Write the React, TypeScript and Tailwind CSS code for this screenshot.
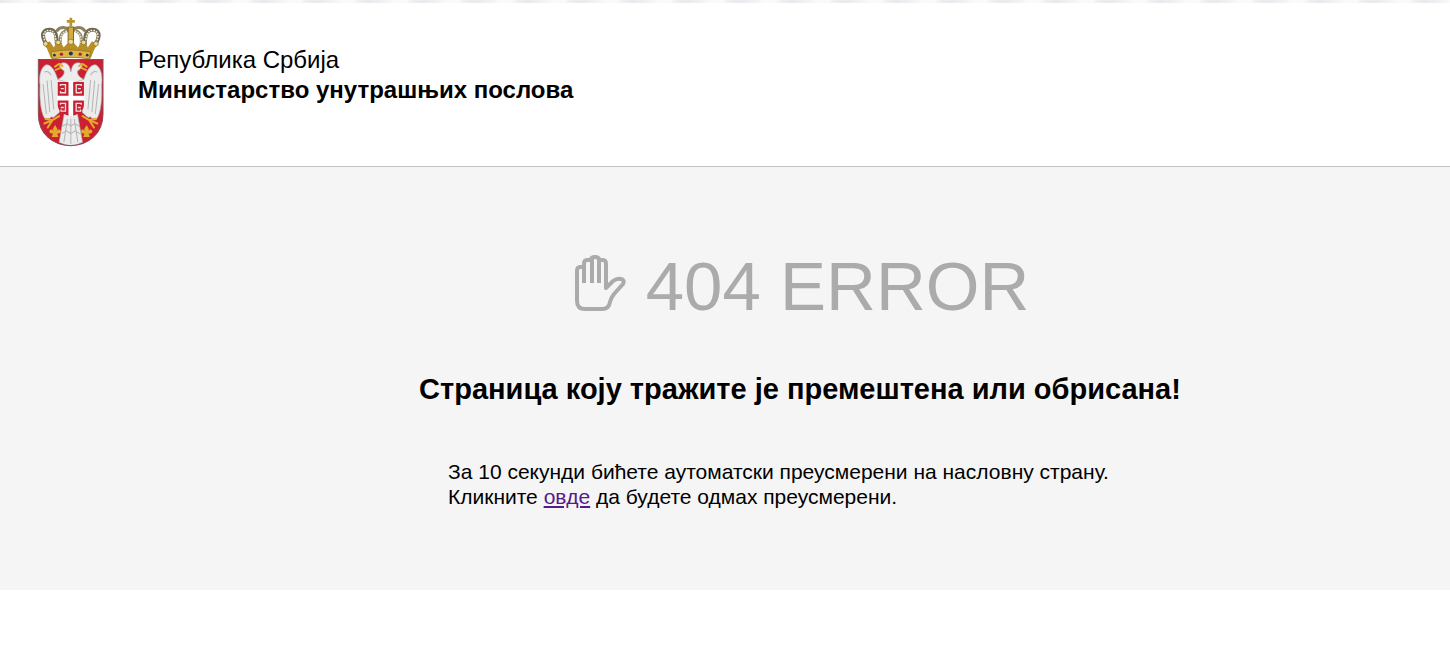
import { useId } from "react";

function Emblem() {
  const clip = useId();
  return (
    <svg viewBox="0 0 200 388" className="h-[130px] w-[67px] shrink-0" role="img" aria-label="Грб Републике Србије">
      <defs>
        <clipPath id={clip}>
          <path d="M4 127H197V290C197 350 150 384 100 384C50 384 4 350 4 290Z" />
        </clipPath>
      </defs>
      {/* crown */}
      <path d="M97 2h8v7h8v8h-8v11h-8v-11h-8V9h8Z" fill="#b8942f" />
      <g fill="none" strokeLinecap="round">
        <path d="M42 98C10 66 12 38 36 38C60 38 58 60 60 90M160 98C192 66 190 38 166 38C142 38 144 60 142 90" stroke="#6f6850" strokeWidth="12" />
        <path d="M60 40C70 28 88 30 96 38M142 40C132 28 114 30 106 38M72 90C66 62 70 44 90 40M130 90C136 62 132 44 112 40" stroke="#8b815c" strokeWidth="9" />
        <path d="M40 94C12 66 16 40 36 40C54 40 56 60 58 84M162 94C190 66 186 40 166 40C148 40 146 60 144 84M72 84C68 60 72 46 90 42M130 84C134 60 130 46 112 42" stroke="#ece7d3" strokeWidth="5" strokeDasharray="1 7" />
      </g>
      <path d="M93 30H109V90H93Z" fill="#d3ac3c" stroke="#7d6326" strokeWidth="3" />
      <path d="M24 80L38 72L50 90L64 70L80 90L101 68L122 90L138 70L152 90L164 72L178 80L160 124Q101 114 42 124Z" fill="#b98f25" />
      <path d="M42 104Q101 93 160 104L156 125Q101 116 46 125Z" fill="#dcb545" stroke="#8c6b1f" strokeWidth="2" />
      <g fill="#eed98e" stroke="#80632c" strokeWidth="2">
        <circle cx="26" cy="80" r="7" />
        <circle cx="63" cy="76" r="7" />
        <circle cx="101" cy="74" r="8" />
        <circle cx="139" cy="76" r="7" />
        <circle cx="176" cy="80" r="7" />
      </g>
      <circle cx="101" cy="109" r="6" fill="#1f335f" />
      <circle cx="73" cy="111" r="5" fill="#b62130" />
      <circle cx="129" cy="111" r="5" fill="#b62130" />
      <circle cx="52" cy="114" r="4" fill="#1f335f" />
      <circle cx="150" cy="114" r="4" fill="#1f335f" />
      {/* shield */}
      <g clipPath={`url(#${clip})`}>
        <path d="M0 120H200V390H0Z" fill="#cb2031" />
        <g fill="#edeced" stroke="#aaa" strokeWidth="2">
          <path d="M62 186C52 154 38 138 24 144C8 156 6 182 9 204C7 250 12 296 28 308C32 298 38 308 42 298C52 304 56 292 66 286L92 186Z" />
          <path d="M140 186C150 154 164 138 178 144C194 156 196 182 193 204C195 250 190 296 174 308C170 298 164 308 160 298C150 304 146 292 136 286L110 186Z" />
          <path d="M101 200L62 186C76 180 84 170 80 160C72 156 66 150 68 142C76 132 94 136 98 152L101 164L104 152C108 136 126 132 134 142C136 150 130 156 122 160C118 170 126 180 140 186Z" />
          <path d="M82 284H120L136 374Q101 394 66 374Z" />
        </g>
        <g fill="none" stroke="#b4b4b4" strokeWidth="3">
          <path d="M18 200L28 290M30 190L38 284M42 188L50 276M22 164Q34 158 42 174M184 200L174 290M172 190L164 284M160 188L152 276M180 164Q168 158 160 174" />
          <path d="M91 304L80 374M101 304V380M111 304L122 374M76 326L90 318L101 326L112 318L126 326M74 348L88 340L101 348L114 340L128 348" />
        </g>
        <path d="M62 194H140V262Q140 288 101 296Q62 288 62 262Z" fill="#c71f30" />
        <path d="M94 190H108V235H142V249H108V296H94V249H60V235H94Z" fill="#fff" />
        <g fill="none" stroke="#f3dfe1" strokeWidth="4">
          <path d="M70 206V202H85V226H70V221M80 214H71M132 206V202H117V226H132V221M122 214H131M70 262V258H85V281H72V276M80 270H71M132 262V258H117V281H130V276M122 270H131" />
        </g>
        <g fill="none" stroke="#e5ac2b" strokeWidth="6" strokeLinecap="round">
          <path d="M54 148L66 140L76 146M56 158L70 152M148 148L136 140L126 146M146 158L132 152" />
          <path d="M66 296L46 308L22 318M46 308L26 304M46 308L32 330M136 296L156 308L180 318M156 308L176 304M156 308L170 330" />
        </g>
        <path d="M54 322L61 334L58 340Q66 332 71 340Q72 348 60 348L64 358H44L48 348Q36 348 37 340Q42 332 50 340L47 334ZM148 322L155 334L152 340Q160 332 165 340Q166 348 154 348L158 358H138L142 348Q130 348 131 340Q136 332 144 340L141 334Z" fill="#e5ac2b" />
      </g>
      <path d="M4 127H197V290C197 350 150 384 100 384C50 384 4 350 4 290Z" fill="none" stroke="#8d4953" strokeWidth="3" />
    </svg>
  );
}

function Hand() {
  return (
    <svg viewBox="0 0 51 56" className="mb-2 h-14 w-[51px]" fill="none" stroke="#ababab" strokeWidth="4" strokeLinejoin="round" aria-hidden="true">
      <path d="M9 28V12H5Q2 12 2 16V46Q2 54 10 54H27Q34 54 35 47Q36 43 39 39L48 29Q50 25 46 24Q42 23 38 26L31 33V9Q31 5 28 5H24Q24 2 20 2Q16 2 16 5H12Q9 5 9 9V28" />
      <path d="M17 28V4M24 28V4" />
    </svg>
  );
}

export default function App() {
  return (
    <div className="min-h-screen bg-white font-['Liberation_Sans',Arial,sans-serif] text-black">
      <div className="h-[3px] bg-[repeating-linear-gradient(100deg,#e9eaed_0px,#f1f2f4_16px,#fafafc_24px,#fafafc_36px,#eeeff1_42px,#e9eaed_52px)]" />
      <header className="flex items-start border-b border-[#c4c4c4] px-[37px] pt-3.5 pb-[19px]">
        <Emblem />
        <div className="pt-7 pl-[34px] text-2xl leading-[30px]">
          <p>Република Србија</p>
          <p className="font-bold">Министарство унутрашњих послова</p>
        </div>
      </header>

      <main className="bg-[#f5f5f5] pt-20 pb-[81px] pl-[150px]">
        <h1 className="flex items-center justify-center gap-5 pl-1 text-[69px] leading-20 text-[#ababab]">
          <Hand />
          404 ERROR
        </h1>
        <h2 className="mt-11 text-center text-[29px] leading-9 font-bold">
          Страница коју тражите је премештена или обрисана!
        </h2>
        <p className="mx-auto mt-13 max-w-[704px] text-[21px] leading-[25px]">
          За 10 секунди бићете аутоматски преусмерени на насловну страну.
          <br />
          Кликните <a href="/" className="text-[#551a8b] underline">овде</a> да будете одмах преусмерени.
        </p>
      </main>
    </div>
  );
}
